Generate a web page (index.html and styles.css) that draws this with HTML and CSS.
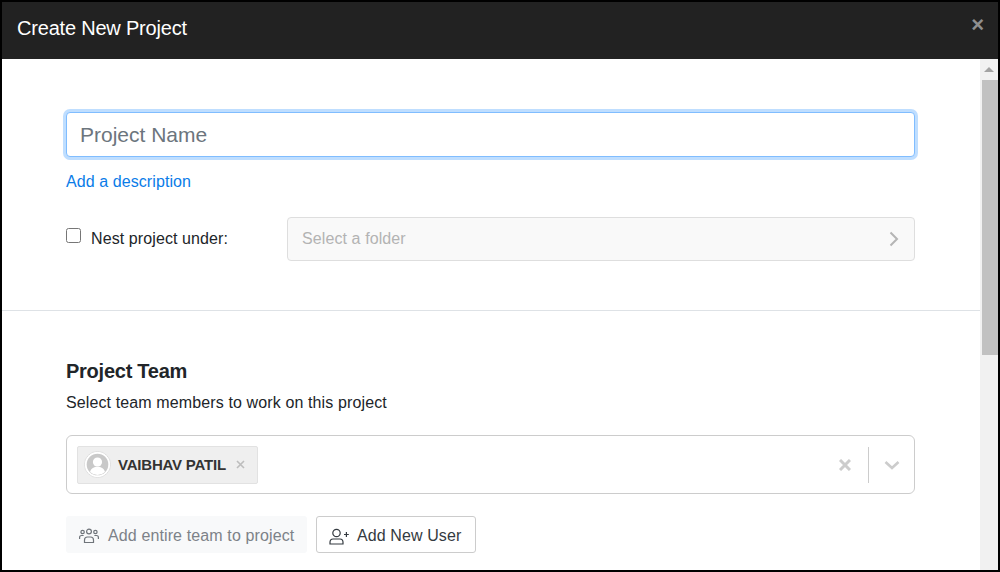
FILE: index.html
```html
<!DOCTYPE html>
<html lang="en">
<head>
<meta charset="utf-8">
<title>Create New Project</title>
<link rel="stylesheet" href="styles.css">
</head>
<body>
<div class="modal">
  <header class="modal-header">
    <h1 class="modal-title">Create New Project</h1>
    <span class="modal-close">×</span>
  </header>
  <div class="modal-main">
    <div class="content">
      <section class="section-top">
        <input class="name-input" type="text" placeholder="Project Name">
        <a class="desc-link" href="#">Add a description</a>
        <div class="nest-row">
          <label class="nest-label"><input class="nest-check" type="checkbox"><span>Nest project under:</span></label>
          <div class="folder-select">
            <span>Select a folder</span>
            <svg class="folder-chevron" width="10" height="16" viewBox="0 0 10 16"><path d="M1.500 1.500l6.500 6.500-6.500 6.500" fill="none" stroke="#b5b5b5" stroke-width="2"/></svg>
          </div>
        </div>
      </section>
      <section class="section-team">
        <h2 class="team-title">Project Team</h2>
        <p class="team-sub">Select team members to work on this project</p>
        <div class="team-select">
          <div class="chip">
            <span class="avatar">
              <svg width="25" height="25" viewBox="0 0 25 25"><circle cx="12.500" cy="12.500" r="12.500" fill="#fff"/><circle cx="12.500" cy="12.500" r="10.800" fill="#c9c9c9"/><circle cx="12.500" cy="10" r="4.600" fill="#fff"/><path d="M5 20c1-3.800 4-5.200 7.500-5.200s6.500 1.400 7.500 5.200A10.800 10.800 0 0 1 5 20z" fill="#fff"/></svg>
            </span>
            <span class="chip-name">VAIBHAV PATIL</span>
            <svg class="chip-x" width="9" height="9" viewBox="0 0 9 9"><path d="M1 1l7 7M8 1l-7 7" stroke="#bdbdbd" stroke-width="1.600" fill="none"/></svg>
          </div>
          <div class="select-tools">
            <svg width="12" height="12" viewBox="0 0 12 12"><path d="M1 1l10 10M11 1L1 11" stroke="#ccc" stroke-width="3" fill="none"/></svg>
            <span class="tool-sep"></span>
            <svg width="16" height="10" viewBox="0 0 16 10"><path d="M1.500 2l6.500 6 6.500-6" stroke="#ccc" stroke-width="2.600" fill="none"/></svg>
          </div>
        </div>
        <div class="team-actions">
          <button class="btn-team" type="button">
            <svg width="20" height="16" viewBox="0 0 20 16" fill="none" stroke="#6f747a" stroke-width="1.200"><circle cx="10" cy="3.500" r="2.400"/><circle cx="3.600" cy="4" r="1.700"/><circle cx="16.400" cy="4" r="1.700"/><path d="M5.500 14.500v-2.500c0-2 1.500-3 3-3h3c1.500 0 3 1 3 3v2.500z"/><path d="M.6 11v-1.500c0-1.300 1-2 2-2h2M19.400 11v-1.500c0-1.300-1-2-2-2h-2"/></svg>
            <span>Add entire team to project</span>
          </button>
          <button class="btn-user" type="button">
            <svg width="20" height="17" viewBox="0 0 20 17" fill="none" stroke="#343a40" stroke-width="1.200"><circle cx="7.500" cy="5" r="3.700"/><path d="M1 16v-1.800c0-2 1.500-3.200 3-3.200h7c1.500 0 3 1.200 3 3.200V16z"/><path d="M15 6.500h4.800M17.400 4v5"/></svg>
            <span>Add New User</span>
          </button>
        </div>
      </section>
    </div>
    <div class="scrollbar">
      <div class="scroll-up"><span class="scroll-arrow"></span></div>
      <div class="scroll-thumb"></div>
    </div>
  </div>
</div>
</body>
</html>
```

FILE: styles.css
```css
* { box-sizing: border-box; }
html, body { margin: 0; height: 100%; overflow: hidden; }
body { font-family: "Liberation Sans", Arial, sans-serif; background: #fff; color: #212529; }
.modal { width: 1000px; height: 572px; border: 2px solid #000; display: flex; flex-direction: column; overflow: hidden; }
.modal-header { height: 57px; flex: none; background: #222; color: #fff; display: flex; align-items: center; justify-content: space-between; padding: 0 15px; }
.modal-title { margin: 0 0 6px; font-size: 20px; font-weight: 400; line-height: 24px; letter-spacing: -0.2px; }
.modal-close { color: #8f8f8f; font-size: 22px; font-weight: 700; line-height: 1; margin-bottom: 11px; margin-right: -1px; }
.modal-main { flex: 1; min-height: 0; display: flex; }
.content { flex: 1; min-width: 0; overflow: hidden; }
.section-top { height: 252px; padding: 53px 65px 0 64px; border-bottom: 1px solid #dee2e6; }
.name-input { display: block; width: 100%; height: 45px; padding: 1px 13px 0; border: 1px solid #80bdff; border-radius: 4px; box-shadow: 0 0 0 3px rgba(0,123,255,.25); font: 21px "Liberation Sans", Arial, sans-serif; color: #495057; outline: 0; }
.name-input::placeholder { color: #6c757d; opacity: 1; }
.desc-link { display: block; margin-top: 16px; font-size: 16px; line-height: 18px; letter-spacing: .08px; color: #0a7ce8; text-decoration: none; }
.nest-row { display: flex; align-items: center; margin-top: 26px; }
.nest-label { width: 221px; display: flex; align-items: center; font-size: 16px; line-height: 20px; letter-spacing: .1px; color: #212529; }
.nest-check { width: 15px; height: 15px; margin: 0 10px 8px 0; flex: none; }
.folder-select { flex: 1; height: 44px; padding: 0 15px 0 14px; display: flex; align-items: center; justify-content: space-between; background: #f9f9f9; border: 1px solid #dedede; border-radius: 4px; font-size: 16px; letter-spacing: .1px; color: #b3b3b3; }
.section-team { padding: 48px 65px 0 64px; }
.team-title { margin: 0; font-size: 20px; line-height: 24px; font-weight: 700; letter-spacing: -0.25px; color: #212529; }
.team-sub { margin: 10px 0 0; font-size: 16px; line-height: 19px; letter-spacing: .12px; color: #212529; }
.team-select { margin-top: 23px; height: 59px; padding: 0 14px 0 10px; display: flex; align-items: center; justify-content: space-between; border: 1px solid #ccc; border-radius: 6px; }
.chip { height: 38px; padding: 0 12px 0 6px; display: flex; align-items: center; background: #efefef; border: 1px solid #e2e2e2; border-radius: 2px; }
.avatar { width: 27px; height: 27px; display: flex; align-items: center; justify-content: center; background: #fff; border: 1px solid #ddd; border-radius: 50%; }
.chip-name { margin-left: 7px; font-size: 15px; font-weight: 700; letter-spacing: -0.2px; color: #333; }
.chip-x { margin-left: 10px; }
.select-tools { display: flex; align-items: center; }
.tool-sep { width: 1px; height: 36px; margin: 0 15px 0 17px; background: #ccc; }
.team-actions { display: flex; gap: 9px; margin-top: 22px; }
.btn-team, .btn-user { height: 37px; padding-top: 3px; padding-bottom: 0; display: flex; align-items: center; white-space: nowrap; font: 16px "Liberation Sans", Arial, sans-serif; border-radius: 3px; }
.btn-team { width: 241px; padding-left: 13px; padding-right: 0; gap: 9px; background: #f8f9fa; border: 0; letter-spacing: .12px; color: #7d8288; }
.btn-user { width: 160px; padding-left: 12px; padding-right: 0; gap: 8px; background: #fff; border: 1px solid #ccc; letter-spacing: .1px; color: #343a40; }
.scrollbar { width: 18px; flex: none; background: #f1f1f1; }
.scroll-up { height: 21px; display: flex; align-items: center; justify-content: center; }
.scroll-arrow { width: 0; height: 0; border: 5px solid transparent; border-top: 0; border-bottom-color: #a3a3a3; }
.scroll-thumb { height: 275px; margin-left: 2px; background: #c1c1c1; }
```
